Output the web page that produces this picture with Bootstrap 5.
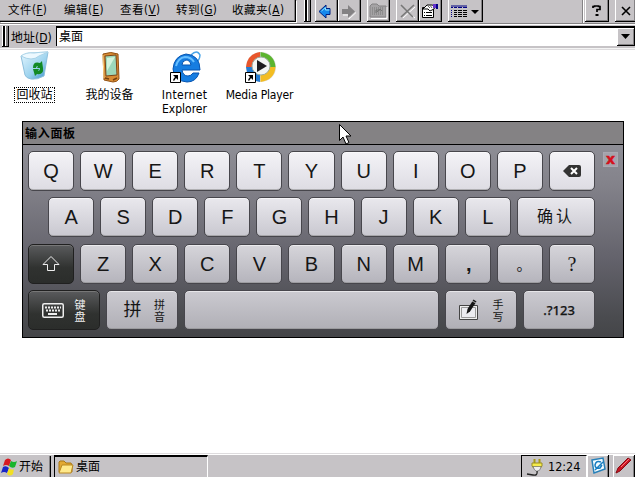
<!DOCTYPE html>
<html lang="zh-CN">
<head>
<meta charset="utf-8">
<title>桌面</title>
<meta name="viewport" content="width=device-width, initial-scale=1">
<link href="https://cdn.jsdelivr.net/npm/bootstrap@5.3.0/dist/css/bootstrap.min.css" rel="stylesheet">
<style>
body{width:635px;height:477px;background:#fff;color:#000;font:12px/14px "DejaVu Sans Condensed","Noto Sans CJK SC",sans-serif}
.face{background:#c6c3c6}
svg{display:block;flex:none}
.menu-strip{height:24px;border-bottom:1px solid #848284}
.menu-box{width:296px;height:22px;border-right:1px solid #000;border-bottom:1px solid #000;box-shadow:inset -1px -1px #848284,1px 1px #fff;padding-left:8px;font-size:11.5px}
.menu-box span{width:56px;height:21px;line-height:21px;white-space:nowrap;letter-spacing:.45px}
.grip{width:7px;border:solid #000;border-width:0 1px 1px 0;box-shadow:inset 1px 0 #fff,inset -2px 0 #848284,inset 3px 0 #000,inset 4px 0 #fff;flex:none}
.tool{height:22px;border:solid #000;border-width:0 1px 1px 0;box-shadow:inset 1px 0 #fff,inset -1px -1px #848284;flex:none}
.addr{height:24px;border-top:1px solid #fff}
.addr-label{width:47px;font-size:12px;line-height:26px;white-space:nowrap;padding-left:2px}
.addr-box{background:#fff;border:solid #000;border-width:2px 0 0 1px;margin-top:1px;height:20px;padding-left:2px;line-height:19px}
.drop{width:18px;height:18px;border:solid #000;border-width:0 1px 1px 0;box-shadow:inset 1px 1px #fff,inset -1px -1px #848284}
.edge{height:2px;background:#dedcde;border-top:1px solid #f4f4f4}
.desk{height:71px;padding:1px 0 0 0}
.shortcut{width:75px;line-height:14px;flex:none}
.shortcut svg{margin-bottom:3px}
.shortcut span{white-space:nowrap}
.wide{letter-spacing:.35px}
.tight{letter-spacing:-.15px}
.picked{outline:1px dotted #000;padding:0 1px}
.panel{width:602px;height:217px;margin-left:22px;border:1px solid #000;background:linear-gradient(#94949c,#84838b 28%,#62616a 65%,#4b4c50 90%,#444548)}
.panel-title{height:23px;background:#848284;border-bottom:1px solid #000;font-weight:700;padding-left:2px;line-height:24px;letter-spacing:.7px}
.keys{width:567px;margin:6px 0 0 5px;gap:6.4px}
.key-row{height:40px;gap:6px}
.key{flex:1 1 0;min-width:0;height:40px;border-radius:5px;border:1px solid #47464c;color:#161616;font:20px/38px "Liberation Sans","Noto Sans CJK SC",sans-serif;box-shadow:inset 0 1px #fff8,inset 0 -1px #8888}
.r1 .key{background:linear-gradient(#f4f3f7,#dddce3)}
.r2 .key{background:linear-gradient(#e9e8ed,#c9c8d0)}
.r3 .key{background:linear-gradient(#d6d5da,#b5b4bc)}
.r4 .key{background:linear-gradient(#cbcad0,#b0afb6)}
.key-row .dark{background:linear-gradient(#5a5b5d,#303230 60%,#2b2d2b);border-color:#202020;color:#eee;box-shadow:inset 0 1px #777}
.key.fix46{flex:0 0 46.1px}
.key.fix72{flex:0 0 72px}
.key.confirm{font-size:16px;letter-spacing:3px}
.key.comma{font-weight:700;text-indent:2px}
.key.stop{font-family:"Noto Sans CJK SC",sans-serif;font-size:15px;text-indent:8px}
.key.query{font-family:"Liberation Serif",serif}
.key.digits{font:500 13px/38px "Noto Sans",sans-serif;-webkit-text-stroke:.25px #161616}
.indent{margin-left:20px}
.pair{font:11px/12.5px "Noto Sans CJK SC",sans-serif;width:12px}
.close-key{width:15px;height:15px;background:#a4a3ac;border:1px solid #aaa9b2;color:#d5101c;font:bold 14px/12px "DejaVu Sans",sans-serif;margin:7px 0 0 8px;-webkit-text-stroke:.5px #d5101c}
.cursor{left:339px;top:124px}
.task{height:24px;border-top:1px solid #dedcde;box-shadow:inset 0 1px #fff}
.start{width:51px;border-right:1px solid #000;box-shadow:inset -1px 0 #848284;margin-top:2px;height:21px}
.active-task{width:154px;margin:1px 0 0 3px;border:solid #000;border-width:2px 0 0 1px;border-right:1px solid #fff;height:22px;padding-left:3px}
.tray{width:66px;margin-top:1px;border:solid #000;border-width:1px 0 0 1px;border-right:1px solid #fff;height:22px}
.tray-btn{width:22px;height:22px;margin-top:1px;border-right:1px solid #000;box-shadow:inset 1px 1px #fff,inset -1px 0 #848284}
</style>
<script src="https://cdn.jsdelivr.net/npm/bootstrap@5.3.0/dist/js/bootstrap.bundle.min.js"></script>
</head>
<body class="d-flex flex-column overflow-hidden position-relative">
<nav class="menu-strip face d-flex">
  <div class="menu-box d-flex flex-shrink-0">
    <span>文件(<u>F</u>)</span><span>编辑(<u>E</u>)</span><span>查看(<u>V</u>)</span><span>转到(<u>G</u>)</span><span>收藏夹(<u>A</u>)</span>
  </div>
  <div class="grip ms-2" style="height:22px"></div>
  <div class="tool ms-1" style="width:23px"><svg width="22" height="22"><path d="M4 11.500l7-6.500v3.500h4v6h-4V18z" fill="#1688ed" stroke="#002080"/><path d="M6.500 11l4-3.500v2.500h4" fill="none" stroke="#8ce4ff"/></svg></div>
  <div class="tool" style="width:23px"><svg width="22" height="22"><path d="M18 12.500l-7 6.500v-4H5" fill="none" stroke="#fff"/><path d="M17 11.500l-7-6.500v4H4v5h6v4z" fill="#848284"/></svg></div>
  <div class="tool" style="width:23px;margin-left:6px"><svg width="22" height="22"><path d="M3 17V6l2-2h5l2 2h7v11z" fill="#a5a3a5" stroke="#848284"/><path d="M4 18.500h16V7" fill="none" stroke="#fff"/><path d="M5 8h12M5 10h12M5 12h12M5 14h12" stroke="#777" stroke-dasharray="1 1"/><path d="M9 13v-3h4M10 12l3-3 2 2" fill="none" stroke="#777"/></svg></div>
  <div class="tool" style="width:23px;margin-left:6px"><svg width="22" height="22"><path d="M6 6l13 12M19 7L7 18" stroke="#fff"/><path d="M5 5l12 12M18 5L5 17" stroke="#777" stroke-width="1.600"/></svg></div>
  <div class="tool" style="width:23px"><svg width="22" height="22"><path d="M3.500 7.500h11v10h-11z" fill="#fff" stroke="#000"/><path d="M5 12.500h1m1 0h6M5 15.500h1m1 0h6" stroke="#000"/><path d="M4 9l4-4h5l3 1-1 3-4 2-2-2z" fill="#fff" stroke="#000"/><path d="M8 5l3 3M10 4l3 4" stroke="#666"/><path d="M14 4h3v4h-3z" fill="#63c"/><path d="M17 4h2v5h-2z" fill="#000084"/></svg></div>
  <div class="tool" style="width:35px;margin-left:6px"><svg width="34" height="22"><path d="M3 6h16" stroke="#000084" stroke-width="1"/><path d="M3 7.500h2m1 0h3m1 0h4m1 0h4" stroke="#000084"/><path d="M3.500 10v8" stroke="#000084" stroke-dasharray="1 1"/><path d="M6 10.500h3m1 0h4m1 0h4M6 12.500h3m1 0h4m1 0h4M6 14.500h3m1 0h4m1 0h4M6 16.500h3m1 0h4m1 0h4" stroke="#000"/><path d="M23 10h8l-4 4z"/></svg></div>
  <div class="ms-auto" style="width:2px;border-left:1px solid #848284;background:#fff;height:23px"></div>
  <div class="tool" style="width:24px;margin-left:1px"><svg width="23" height="22"><path d="M8 8V6.500h1.500V6h4v.5h1.500v3h-3v2.500" fill="none" stroke="#000" stroke-width="1.700"/><path d="M10.500 14h3v2h-3z"/></svg></div>
  <div class="tool" style="width:20px;margin-left:6px;border-right:0"><svg width="20" height="22"><path d="M7 7l8 8M15 7l-8 8" stroke="#000" stroke-width="1.600"/></svg></div>
</nav>
<div class="addr face d-flex">
  <div class="grip" style="height:21px;margin:1px 0 0 2px"></div>
  <div class="addr-label">地址(<u>D</u>)</div>
  <div class="addr-box flex-grow-1 d-flex justify-content-between"><span>桌面</span><div class="drop face"><svg width="17" height="17"><path d="M4 6h9l-4.500 5z"/></svg></div></div>
</div>
<div class="edge"></div>
<main class="desk d-flex flex-shrink-0">
  <div class="shortcut d-flex flex-column align-items-center" style="margin-left:-3px">
    <svg width="34" height="34"><defs><linearGradient id="bin" x2="1" y2="1"><stop stop-color="#e6f7ff"/><stop offset=".6" stop-color="#9bd2ee"/><stop offset="1" stop-color="#338cc8"/></linearGradient></defs><path d="M3 5q7-4 14-3l13-1-4 24q-7 4-13 3-5-1-6-4z" fill="url(#bin)" stroke="#8dbfdc"/><path d="M3 5q11 6 18 0l9-4q-8 0-14 1-8-1-13 3z" fill="#edf9ff" stroke="#a9d3e8"/><path d="M15 17q0-7 7-5l2-2 1 7h-6l1-2q-2 0-2 2zM25 17q1 7-6 6l-2 2-2-7h6l-1 2q2 0 2-3z" fill="#138a25"/></svg>
    <span class="picked">回收站</span></div>
  <div class="shortcut d-flex flex-column align-items-center">
    <svg width="34" height="34"><path d="M10 3q8-3 15 0l1 25q-2 3-6 3l-9-2z" fill="#d88b33" stroke="#925214"/><path d="M12 5l11-1 1 20-11 1z" fill="#9cd8ba" stroke="#7a4518"/><path d="M14 7l8-1-8 14z" fill="#d3f4dc"/><path d="M12 27l4 1m4 1l4-2" stroke="#744010" stroke-width="1.500"/><path d="M10 4l1 23" stroke="#ffd382"/></svg>
    <span>我的设备</span></div>
  <div class="shortcut d-flex flex-column align-items-center text-center">
    <svg width="34" height="34"><path d="M23 4q6-6 9 0 0 3-2 6" fill="none" stroke="#4aa5e8" stroke-width="1.500"/><path d="M32 19H14q1 6 6 6 3 0 5-3h6q-3 9-12 9Q6 30 5 18 6 5 18 3q14 1 14 16zM14 14h9q-1-5-5-5-4 1-4 5z" fill="#167de1" fill-rule="evenodd" stroke="#0755b1"/><path d="M8 15q2-8 9-9 6 0 9 5" fill="none" stroke="#67bfff" stroke-width="2"/><path d="M2.500 21.500h10v10h-10z" fill="#fff" stroke="#000"/><path d="M5 24h5v5l-2-2-2 3q-2-1 1-4z"/></svg>
    <span class="wide">Internet</span><span>Explorer</span></div>
  <div class="shortcut d-flex flex-column align-items-center">
    <svg width="34" height="34"><circle cx="18" cy="16" r="15" fill="#ddd"/><path d="M17 16H3Q4 3 17 1z" fill="#e8562c"/><path d="M17.500 1q14 2 15 15h-15z" fill="#5bb52f"/><path d="M17.500 16h15q-1 13-15 15z" fill="#f3bd22"/><path d="M17 16H3q1 13 14 15z" fill="#247bd1"/><circle cx="18" cy="15" r="9" fill="#f2f6f4" stroke="#9dada0"/><path d="M14 9l10 6-10 6z" fill="#1c1c20"/><path d="M2.500 21.500h10v10h-10z" fill="#fff" stroke="#000"/><path d="M5 24h5v5l-2-2-2 3q-2-1 1-4z"/></svg>
    <span class="tight">Media Player</span></div>
</main>
<section class="panel flex-shrink-0">
  <div class="panel-title">输入面板</div>
  <div class="d-flex">
  <div class="keys d-flex flex-column flex-shrink-0">
    <div class="key-row r1 d-flex text-center">
      <div class="key">Q</div><div class="key">W</div><div class="key">E</div><div class="key">R</div><div class="key">T</div><div class="key">Y</div><div class="key">U</div><div class="key">I</div><div class="key">O</div><div class="key">P</div>
      <div class="key d-flex align-items-center justify-content-center"><svg width="18" height="12"><path d="M0 6l6-6h10q2 0 2 2v8q0 2-2 2H6z" fill="#333"/><path d="M8 3l6 6M14 3L8 9" stroke="#fff" stroke-width="2"/></svg></div>
    </div>
    <div class="key-row r2 indent d-flex text-center">
      <div class="key fix46">A</div><div class="key fix46">S</div><div class="key fix46">D</div><div class="key fix46">F</div><div class="key fix46">G</div><div class="key fix46">H</div><div class="key fix46">J</div><div class="key fix46">K</div><div class="key fix46">L</div>
      <div class="key confirm">确认</div>
    </div>
    <div class="key-row r3 d-flex text-center">
      <div class="key dark d-flex align-items-center justify-content-center"><svg width="20" height="18"><path d="M10 1.500l8 8h-4.500v6h-7v-6H2z" fill="none" stroke="#eee"/></svg></div>
      <div class="key">Z</div><div class="key">X</div><div class="key">C</div><div class="key">V</div><div class="key">B</div><div class="key">N</div><div class="key">M</div>
      <div class="key comma">,</div><div class="key stop">。</div><div class="key query">?</div>
    </div>
    <div class="key-row r4 d-flex text-center">
      <div class="key fix72 dark d-flex align-items-center justify-content-center"><svg width="22" height="15"><rect x=".75" y=".75" width="20.500" height="13.500" rx="1.500" fill="none" stroke="#eee" stroke-width="1.500"/><path d="M3 4.500h16M4 7.500h14" stroke="#eee" stroke-width="1.800" stroke-dasharray="2 1"/><path d="M6 11h9" stroke="#eee" stroke-width="2"/></svg><span class="pair" style="margin-left:10px">键盘</span></div>
      <div class="key fix72 d-flex align-items-center justify-content-center"><span style="font-size:18px;padding-left:5px">拼</span><span class="pair" style="margin-left:12px">拼音</span></div>
      <div class="key"></div>
      <div class="key fix72 d-flex align-items-center justify-content-center"><svg width="21" height="24"><path d="M1.500 7.500h18v14h-18z" fill="#eee" stroke="#444"/><path d="M3.500 9.500h14v10h-14z" fill="#ececf0" stroke="#999"/><path d="M8.500 16l1-5 6-9.500 3 2-6.500 10z" fill="#151515"/><path d="M14 3l4 2" stroke="#aaa"/></svg><span class="pair" style="margin-left:13px">手写</span></div>
      <div class="key fix72 digits">.?123</div>
    </div>
  </div>
  <div class="close-key text-center">x</div>
  </div>
</section>
<svg class="cursor position-absolute" width="13" height="21"><path d="M.5.500v16l3.500-3.500 3 7 3-1.500-3-6.500h5z" fill="#fff" stroke="#000"/></svg>
<footer class="task face d-flex mt-auto flex-shrink-0">
  <div class="start d-flex align-items-center"><svg width="18" height="19"><g><path d="M5 3q3-3 6 0L9 9Q6 7 3 9z" fill="#d71920"/><path d="M11 4q3 2 6 0l-2 6q-3 2-6-1z" fill="#19b52c"/><path d="M3 10q3-2 6 1l-2 5q-3-2-6 0z" fill="#1826c6"/><path d="M9 11q3 3 5 1l-1 5q-3 3-6 0z" fill="#f1df25"/></g></svg><span style="padding-left:1px;white-space:nowrap">开始</span></div>
  <div class="active-task d-flex align-items-center"><svg width="16" height="16"><path d="M1 13V3l1-1h4l2 2h5l1 2v7z" fill="#e3a932" stroke="#a87715"/><path d="M1 14l3-8h11l-2 8z" fill="#ffe98b" stroke="#b98720"/></svg><span style="padding-left:2px">桌面</span></div>
  <div class="tray ms-auto d-flex align-items-center"><svg width="20" height="20" style="margin-left:4px"><path d="M8.500 2v5M13.500 2v5" stroke="#a89a18" stroke-width="2"/><path d="M6 6h10v3q-1 3-5 3-4 0-5-3z" fill="#f5ec4c" stroke="#998d22"/><path d="M7 9.500h8q0 4-4 5-3-1-4-5z" fill="#eee" stroke="#666" stroke-width=".7"/><path d="M11 14q1 5-4 4l-6-1" fill="none" stroke="#222" stroke-width="1.300"/></svg><span style="padding-left:2px;font-size:12.500px">12:24</span></div>
  <div class="tray-btn"><svg width="21" height="21"><path d="M5 5l11-2 2 11-11 4z" fill="#f4fcff" stroke="#2780b9" stroke-width="1.500"/><path d="M14 7q-5-2-6 3 0 4 5 3l2-3M8 15l8-8" fill="none" stroke="#187dc1" stroke-width="1.500"/></svg></div>
  <div class="tray-btn ms-1"><svg width="21" height="21"><path d="M3 18l2-5L15 3l3 2L7 16z" fill="#c91622" stroke="#850b13"/><path d="M8 12l8-8" stroke="#ff7277"/></svg></div>
</footer>
</body>
</html>
